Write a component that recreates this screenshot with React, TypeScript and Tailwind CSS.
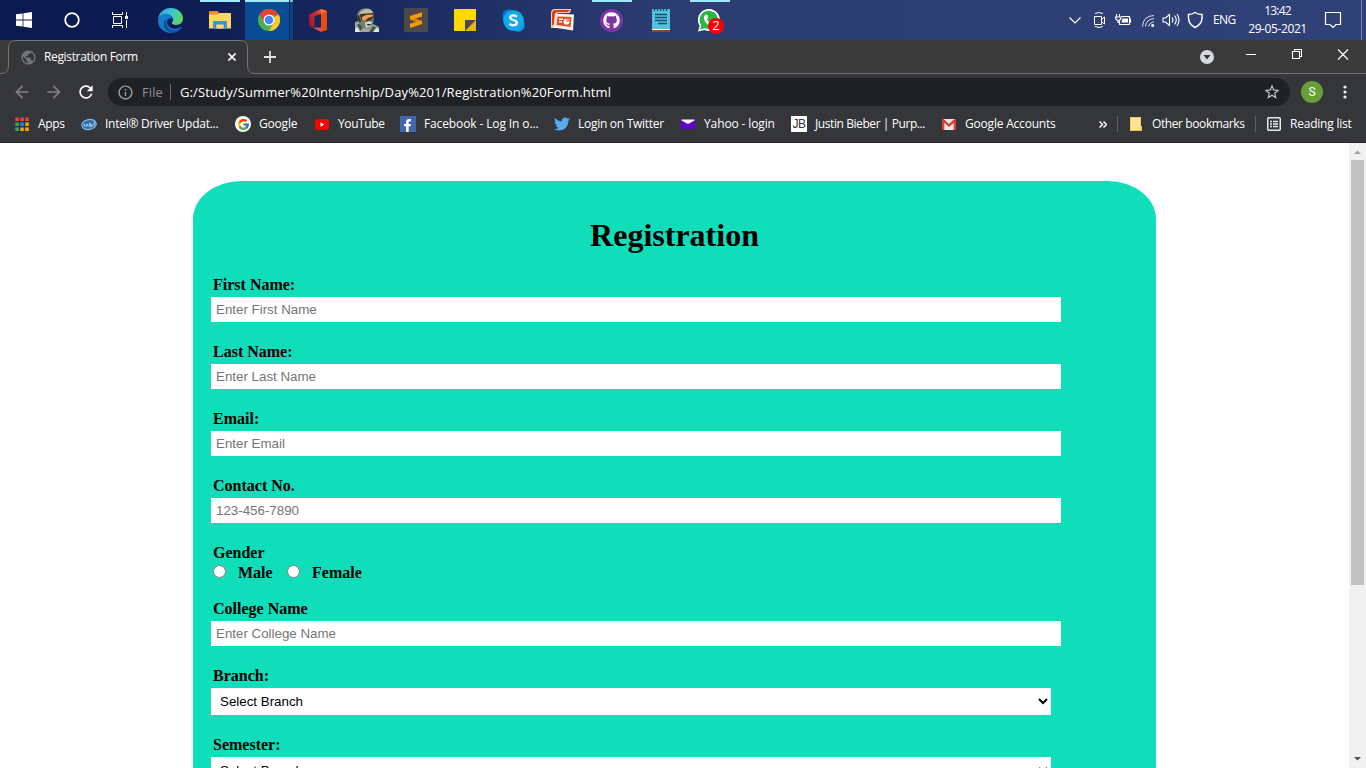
import type { ReactNode } from "react";
import { FaFacebookF, FaGithub, FaTwitter } from "react-icons/fa";
import { FcGoogle } from "react-icons/fc";
import {
  MdArrowBack,
  MdArrowForward,
  MdInfoOutline,
  MdPublic,
  MdRefresh,
  MdStarBorder,
} from "react-icons/md";

/* ---------- Taskbar icons ---------- */

const WindowsLogo = () => (
  <svg width="16" height="16" viewBox="0 0 16 16" fill="#fff">
    <path d="M0 2.3 6.6 1.4V7.6H0zM7.4 1.2 16 0V7.6H7.4zM0 8.4H6.6V14.6L0 13.7zM7.4 8.4H16V16L7.4 14.8z" />
  </svg>
);

const Cortana = () => (
  <svg width="16" height="16" viewBox="0 0 16 16" fill="none">
    <circle cx="8" cy="8" r="6.8" stroke="#fff" strokeWidth="1.800" />
  </svg>
);

const TaskView = () => (
  <svg width="17" height="16" viewBox="0 0 17 16" fill="none" stroke="#fff" strokeWidth="1">
    <path d="M.5 0V2.500H10.500V0M.5 16V13.500H10.500V16M1.500 4.500H9.500V11.500H1.500zM14.500 0V4M14.500 8V16" />
    <path d="M13 4h3v3h-3z" fill="#fff" stroke="none" />
  </svg>
);

const Edge = () => (
  <svg width="25" height="25" viewBox="0 0 24 24">
    <defs>
      <linearGradient id="edgeTop" x1="0" y1=".3" x2="1" y2=".6">
        <stop offset="0" stopColor="#2da4e0" />
        <stop offset=".5" stopColor="#3cc8d4" />
        <stop offset="1" stopColor="#62d854" />
      </linearGradient>
      <linearGradient id="edgeLow" x1="0" y1="0" x2=".7" y2="1">
        <stop offset="0" stopColor="#1482d4" />
        <stop offset="1" stopColor="#1c70c4" />
      </linearGradient>
    </defs>
    <path d="M.2 10.500C1 4 6 0 12 0c7 0 12 4.700 12 10 0 4-3 6.200-6.500 6.200-2.800 0-4.300-1-4.300-1.900 0-.7 1.300-1.100 1.300-3C14.500 8.500 12 6 8 6 4 6 1.500 8 .2 10.500Z" fill="url(#edgeTop)" />
    <path d="M0 12C.3 8.500 3.500 6 7.500 6c4 0 6.800 2.300 7 5-1-1.400-3-1.700-4.300-.6-2.700 2.200-1.600 7.800 4 9.200 3.300.8 5.800-.2 7.600-1.400.5-.3 1 .1.700.6C20.500 22 16.500 24 12 24 5.500 24-.3 18.500 0 12Z" fill="url(#edgeLow)" />
    <path d="M8.800 10.500C6.500 14 8.500 21 15.500 21.500c2.500.2 5-.7 6.800-2.500C20 22.500 16.500 24 13 23.800 8 22.500 5.500 19 5.500 15.500c0-2.300 1.300-4.300 3.300-5Z" fill="#0e4f9e" />
  </svg>
);

const Explorer = () => (
  <svg width="22" height="19" viewBox="0 0 22 19">
    <path d="M0 1Q0 0 1 0H8Q9 0 9.500 1L10 2H21Q22 2 22 3V17H0z" fill="#e39a08" />
    <path d="M0 3.500H9L10.500 2H21Q22 2 22 3V17.500H0z" fill="#ffd767" />
    <path d="M4 18V11Q4 10 5 10H17Q18 10 18 11V18H14.500V13.500H7.500V18z" fill="#3d93d6" />
    <path d="M7.500 14H14.500V17.500H7.500z" fill="#ffd767" />
  </svg>
);

const Chrome = () => (
  <svg width="22" height="22" viewBox="0 0 48 48">
    <circle cx="24" cy="24" r="24" fill="#4caf50" />
    <path d="M24 24 44.800 12A24 24 0 0 1 24 48L34.400 30z" fill="#ffc928" />
    <path d="M3.200 12A24 24 0 0 1 44.800 12L44.800 13.500H24L13.600 30z" fill="#e34134" />
    <circle cx="24" cy="24" r="12" fill="#fff" />
    <circle cx="24" cy="24" r="9.300" fill="#4285f4" />
  </svg>
);

const Office = () => (
  <svg width="18" height="23" viewBox="0 0 18 23">
    <defs>
      <linearGradient id="officeLeft" x1="0" y1="1" x2="1" y2="0">
        <stop offset="0" stopColor="#8e1440" />
        <stop offset=".6" stopColor="#c62b2d" />
        <stop offset="1" stopColor="#f25c2a" />
      </linearGradient>
    </defs>
    <path d="M12 0 18 2V21L12 23z" fill="#eb4b11" />
    <path d="M0 5.500 12 0V5L5.500 7V17L3.500 18.500Q0 17.500 0 14.500z" fill="url(#officeLeft)" />
    <path d="M3.500 18.500H12V23z" fill="#d8515e" />
    <path d="M12 0 18 2 12 5z" fill="#ff7733" />
  </svg>
);

const Spartan = () => (
  <svg width="24" height="24" viewBox="0 0 24 24">
    <path d="M0 14 4 13 8 20 18 16 24 19V24H0z" fill="#9ba89c" />
    <path d="M2 17 5 15 8 20 5 23zM18 18 22 20 19 24H14z" fill="#46564b" />
    <path d="M2 9C2 4 5 1 9 .5 15-.8 19 3 19 8L18 16 14 21 8 20 4 15z" fill="#73826f" />
    <path d="M4 6C6 2 10 .5 14 1L18 4 17 6 5 7z" fill="#b5c0ae" />
    <path d="M5 6 18 5 19 8 16 12 12 14 6 12z" fill="#4b2c20" />
    <path d="M7 9 11 7 18 6.500 17.500 8.500 13 10 10 13 7 12z" fill="#f0a05a" />
    <path d="M10 14 14 13 17 14 15 19 11 20z" fill="#ccd5ca" />
    <path d="M12 16H16L15 17.500H12.500zM2 8 4 7 6 14 4 14z" fill="#2a352e" />
    <path d="M0 24V21L3 19 5 24zM18 24 21 20 24 21V24z" fill="#dfe6dd" />
  </svg>
);

const Sublime = () => (
  <svg width="24" height="24" viewBox="0 0 24 24">
    <rect width="24" height="24" rx="1.500" fill="#4a4a4a" />
    <path d="M18 4.300V8.500L11 10.800 18 13V16L6 20V15.800L12.500 13.700 6 11.500V8z" fill="#ff9800" />
    <path d="M6 11.500 12.500 13.700 18 13 11 10.800z" fill="#e47f00" />
  </svg>
);

const StickyNotes = () => (
  <svg width="22" height="22" viewBox="0 0 22 22">
    <path d="M0 0H22V22H0z" fill="#ffd800" />
    <path d="M11 22 22 11V22z" fill="#edb400" />
    <path d="M11 11H22L11 22z" fill="#494a4c" />
  </svg>
);

const Skype = () => (
  <svg width="23" height="23" viewBox="0 0 23 23">
    <circle cx="7" cy="7" r="6.700" fill="#0078cf" />
    <circle cx="16.200" cy="16.200" r="6.500" fill="#0a9ae4" />
    <circle cx="11.500" cy="11.500" r="10.300" fill="#12a9ed" />
    <path d="M15 7.700C14 6.700 12.800 6.400 11.400 6.400c-1.900 0-3.200.8-3.200 2.200 0 3.100 6.600 1.700 6.600 5 0 1.700-1.600 2.700-3.600 2.700-1.400 0-2.800-.5-3.700-1.400" fill="none" stroke="#fff" strokeWidth="2.300" />
  </svg>
);

const PowerPoint = () => (
  <svg width="24" height="22" viewBox="0 0 24 22">
    <path d="M0 17V4Q0 0 4 0H20Q20 3 18 4H6V19H0z" fill="#f4cbb8" />
    <path d="M1 16V5Q1 1 5 1H19L17 3H7Q4 3 4 6V17z" fill="#da3f13" />
    <path d="M4 4.500 23 5.500 22 21.500 2.500 18.500z" fill="#fff1e9" />
    <path d="M6.500 7.500 20.500 8 19.500 18 5.500 16z" fill="#e84c1c" />
    <path d="M8 9.500H12V11H8zM8 12H11V13.500H8z" fill="#fff" />
    <circle cx="15.500" cy="12.800" r="3" fill="#fff" />
    <path d="M15.500 12.800V9.500H19V12.800z" fill="#f08a62" />
  </svg>
);

const Notepad = () => (
  <svg width="18" height="24" viewBox="0 0 18 24">
    <path d="M0 21H18V24H0z" fill="#8a4a14" />
    <path d="M0 20H18V22H0z" fill="#fff4df" />
    <path d="M0 1H18V21H0z" fill="#55bfe0" />
    <path d="M2.500 0V3M5.500 0V3M8.500 0V3M11.500 0V3M14.500 0V3" stroke="#174863" strokeWidth="1.300" />
    <path d="M3 6.500H15M3 9.500H15M3 12.500H15M6 15.500H15" stroke="#14526b" strokeWidth="1.300" />
  </svg>
);

const WhatsApp = () => (
  <svg width="23" height="23" viewBox="0 0 23 23">
    <path d="M0 22.500 1.600 16.800A11 11 0 1 1 6.500 21z" fill="#fff" />
    <path d="M2 20.500 3.300 16.300A9.200 9.200 0 1 1 7 19.300z" fill="#2bb741" />
    <path d="M7.500 5.500 9.500 6 10 9 9 10.500Q10.500 13 13 14L14.500 12.500 17 14Q17 17 13.500 17.200 8 16 6 10 5.500 7 7.500 5.500Z" fill="#fff" />
  </svg>
);

function TaskButton({ children, running = false, active = false }: { children: ReactNode; running?: boolean; active?: boolean }) {
  return (
    <div className={`relative flex h-10 shrink-0 items-center justify-center ${active ? "ml-px w-12 bg-[#0a4c93]" : "w-[49px]"}`}>
      {running && <span className="absolute top-0 left-[5px] h-[2px] w-10 bg-[#a0e8fc]" />}
      {active && (
        <>
          <span className="absolute top-0 left-0 h-[2px] w-11 bg-[#a0e8fc]" />
          <span className="absolute top-0 right-0 h-full w-1 border-l border-[#052c65] bg-[#0b437f]" />
          <span className="absolute top-0 right-0 h-[2px] w-[3px] bg-[#80b9cb]" />
        </>
      )}
      {children}
    </div>
  );
}

function Tray() {
  return (
    <div className="relative flex h-10 w-[300px] items-center text-white">
      <svg className="w-[300px] shrink-0" height="40" viewBox="1066 0 300 40" fill="none" stroke="#fff" strokeWidth="1.200">
        <path d="M1069.500 17.500 1075 23 1080.500 17.500" />
        <path d="M1094.500 16.500H1101.500V24.500H1094.500zM1102 19 1104.500 17V24L1102 22M1095 13.500Q1099 11.500 1103 13.500M1095 26.500Q1099 28.500 1103 26.500" strokeWidth="1" />
        <path d="M1122 17.500H1144.500" stroke="none" />
        <path d="M1121.500 16.500H1129.500V24.500H1119.500V21M1130.500 18.500V22.500M1116.500 14V17M1119.500 14V17M1115 17H1121V18Q1121 20 1118 20.500 1115.500 20 1115.500 17M1118 20V22.500H1120" strokeWidth="1.100" />
        <path d="M1122.500 18.500H1128V22.500H1121.500z" fill="#fff" stroke="none" />
        <path d="M1142.500 26.500Q1143 16 1154 15.500M1145.500 26.500Q1146 19.500 1154 18.500M1148.500 26.500Q1149 23 1154 21.500" stroke="#dfe4ef" strokeWidth="1" />
        <circle cx="1152.700" cy="25.500" r="1.500" fill="#fff" stroke="none" />
        <path d="M1163 18H1165.500L1169.500 14.500V25.500L1165.500 22H1163zM1172 17.500Q1174 20 1172 22.500M1174.500 15.500Q1178 20 1174.500 24.500M1177 14Q1181 20 1177 26" strokeWidth="1.100" />
        <path d="M1195 12.500Q1198 14.500 1202 14.500V18Q1202 24 1195 27.500 1188.500 24 1188.500 18V14.500Q1192 14.500 1195 12.500Z" strokeWidth="1.500" />
        <path d="M1325.500 12.500H1340.500V24.500H1336L1333 27.500 1330 24.500H1325.500z" />
        <path d="M1361.500 0V40" stroke="#7785ad" strokeWidth="1" />
      </svg>
      <span className="absolute top-[12px] left-[147px] text-[12px] leading-4 tracking-[-0.6px]">ENG</span>
      <div className="absolute top-[2px] left-[172px] w-20 text-center text-[12px] leading-[18px]">
        <div className="-ml-px tracking-[-0.8px]">13:42</div>
        <div className="-ml-px tracking-[-0.4px]">29-05-2021</div>
      </div>
    </div>
  );
}

function Taskbar() {
  return (
    <div className="flex h-10 shrink-0 justify-between bg-linear-to-r from-[#0b1a50] from-10% via-[#2c3d72] via-50% to-[#2f4178]">
      <div className="flex">
        <div className="flex w-12 items-center justify-center"><WindowsLogo /></div>
        <div className="flex w-12 items-center justify-center"><Cortana /></div>
        <div className="mr-px flex w-[49px] items-center justify-center"><TaskView /></div>
        <TaskButton><Edge /></TaskButton>
        <TaskButton running><Explorer /></TaskButton>
        <TaskButton active><Chrome /></TaskButton>
        <TaskButton><Office /></TaskButton>
        <TaskButton><Spartan /></TaskButton>
        <TaskButton><Sublime /></TaskButton>
        <TaskButton><StickyNotes /></TaskButton>
        <TaskButton><Skype /></TaskButton>
        <TaskButton><PowerPoint /></TaskButton>
        <TaskButton running>
          <span className="flex size-[23px] items-center justify-center rounded-full bg-[#7d35a5] text-white">
            <FaGithub size={17} />
          </span>
        </TaskButton>
        <TaskButton><Notepad /></TaskButton>
        <TaskButton running>
          <WhatsApp />
          <span className="absolute top-[18px] left-[23px] flex size-4 items-center justify-center rounded-full bg-[#fb0007] text-[13px] text-white">2</span>
        </TaskButton>
      </div>
      <Tray />
    </div>
  );
}

/* ---------- Browser ---------- */

function TabStrip() {
  return (
    <div className="relative flex h-[34px] shrink-0 bg-[#3a3a3a] text-white">
      <svg className="absolute inset-0" width="1366" height="34" fill="#35363a" stroke="#747577">
        <path d="M-1 33.500H1Q8.500 33.500 8.500 26V8Q8.500.5 16 .5H240Q247.500.5 247.500 8V26Q247.500 33.500 255 33.500H1367V36H-1z" />
      </svg>
      <div className="relative flex h-[34px] w-[248px] items-center pl-5">
        <MdPublic className="text-[#73757a]" size={17} />
        <span className="ml-[7px] flex-1 text-[12px] tracking-[-0.35px]">Registration Form</span>
        <svg className="mr-3" width="8" height="8" viewBox="0 0 8 8" stroke="#fff" strokeWidth="1.600"><path d="M.4.4 7.600 7.600M7.600.4.4 7.600" /></svg>
      </div>
      <svg className="relative mt-[11px] ml-4" width="12" height="12" viewBox="0 0 12 12" stroke="#dee1e6" strokeWidth="1.800"><path d="M6 0V12M0 6H12" /></svg>
      <svg className="relative ml-auto" width="176" height="34" viewBox="1190 40 176 34" fill="none" stroke="#fff">
        <circle cx="1207" cy="57" r="7" fill="#d5d8dc" stroke="none" />
        <path d="M1203.500 55H1210.500L1207 59.500z" fill="#35363a" stroke="none" />
        <path d="M1246 54.500H1256M1292.500 51.500H1299.500V58.500H1292.500zM1294.500 51V49.500H1301.500V56.500H1300M1338 49.500 1348 59.500M1348 49.500 1338 59.500" strokeWidth="1.100" />
      </svg>
    </div>
  );
}

function Toolbar() {
  return (
    <div className="flex h-9 shrink-0 items-center bg-[#35363a] text-white">
      <MdArrowBack className="ml-3 text-[#808184]" size={20} />
      <MdArrowForward className="ml-3 text-[#808184]" size={20} />
      <MdRefresh className="ml-3" size={20} />
      <div className="ml-3 flex h-7 w-[1182px] items-center rounded-full bg-[#202124] pl-[9px]">
        <MdInfoOutline className="text-[#9aa0a6]" size={17} />
        <span className="ml-2 w-[21px] pt-0.5 text-[13px] tracking-[0.1px] text-[#8c9095]">File</span>
        <span className="ml-[7px] h-4 w-px bg-[#6a6c70]" />
        <span className="ml-[9px] pt-0.5 text-[13px] tracking-[0.125px] whitespace-nowrap">G:/Study/Summer%20Internship/Day%201/Registration%20Form.html</span>
        <MdStarBorder className="mr-[9px] ml-auto text-[#c5c8cc]" size={18} />
      </div>
      <span className="ml-[11px] flex size-[22px] items-center justify-center rounded-full bg-[#689f38] font-['Roboto',sans-serif] text-[12px]">S</span>
      <svg className="ml-5" width="4" height="14" viewBox="0 0 4 14" fill="#f1f3f4">
        <circle cx="2" cy="2" r="1.600" /><circle cx="2" cy="7" r="1.600" /><circle cx="2" cy="12" r="1.600" />
      </svg>
    </div>
  );
}

const appColors = ["#e8453c", "#e8453c", "#e8453c", "#34a853", "#1a85ff", "#f5ab00", "#34a853", "#f5ab00", "#f5ab00"];

const AppsIcon = () => (
  <svg width="14" height="14" viewBox="0 0 14 14">
    {appColors.map((color, i) => (
      <rect key={i} x={(i % 3) * 5 + 0.3} y={Math.floor(i / 3) * 5 + 0.5} width="3.500" height="3.500" fill={color} />
    ))}
  </svg>
);

const IntelIcon = () => (
  <svg width="17" height="13" viewBox="0 0 17 13" fill="none">
    <ellipse cx="8.500" cy="6.500" rx="7.700" ry="5.300" transform="rotate(-10 8.500 6.500)" fill="#2c6cab" stroke="#84bde9" strokeWidth="1.200" />
    <path d="M3.500 5.500V9M5.500 9V6.500H7.500V9M9.500 4.500V9M12 9H10.500V7H13M14 3.500V8.500M8.500 6H10.500" stroke="#b4d9f5" />
  </svg>
);

const GoogleIcon = () => (
  <span className="flex size-4 items-center justify-center rounded-full bg-white"><FcGoogle size={13} /></span>
);

const YouTubeIcon = () => (
  <svg width="14" height="11" viewBox="0 0 14 11"><rect width="14" height="11" rx="2.500" fill="#f00" /><path d="M5.500 3.200V7.800L9.300 5.500z" fill="#fff" /></svg>
);

const FacebookIcon = () => (
  <span className="flex size-4 items-end justify-end bg-[#4267b2] pr-0.5 text-white"><FaFacebookF size={13} /></span>
);

const YahooIcon = () => (
  <svg width="14" height="10" viewBox="0 0 14 10"><path d="M0 0H14V10H0z" fill="#6001d2" /><path d="M.5.5H13.500V1.500L7 5 .5 1.500z" fill="#fff" /></svg>
);

const JbIcon = () => (
  <span className="flex size-4 items-center justify-center bg-white font-['Liberation_Sans',sans-serif] text-[12px] tracking-[-0.5px] text-[#333]">JB</span>
);

const GmailIcon = () => (
  <svg width="14" height="11" viewBox="0 0 14 11"><path d="M0 0H14V11H0z" fill="#e8e8e8" /><path d="M1.200 11V1.200L7 6.500 12.800 1.200V11" fill="none" stroke="#d93c31" strokeWidth="2.300" /></svg>
);

const FolderIcon = () => (
  <svg width="12" height="14" viewBox="0 0 12 14"><path d="M0 0H11V9H12V14H0z" fill="#f4cc55" /><path d="M1 1H10V10L9 13H1z" fill="#ffe493" /></svg>
);

const ReadingListIcon = () => (
  <svg width="14" height="14" viewBox="0 0 14 14" fill="none" stroke="#e8eaed"><rect x=".75" y=".75" width="12.500" height="12.500" rx="1" strokeWidth="1.500" /><path d="M3 4.500H5M6 4.500H11M3 7H5M6 7H11M3 9.500H5M6 9.500H11" strokeWidth="1.400" /></svg>
);

function Bookmark({ icon, label, className }: { icon: ReactNode; label: string; className: string }) {
  return (
    <div className={`flex shrink-0 items-center whitespace-nowrap ${className}`}>
      <span className="mr-2 flex w-4 shrink-0 items-center justify-center">{icon}</span>
      {label}
    </div>
  );
}

function BookmarksBar() {
  return (
    <div className="flex h-[33px] shrink-0 items-center border-b border-[#27282b] bg-[#35363a] pb-1 pl-[14px] text-[12px] text-white">
      <Bookmark icon={<AppsIcon />} label="Apps" className="w-[67px] tracking-[-0.3px]" />
      <Bookmark icon={<IntelIcon />} label="Intel® Driver Updat..." className="w-[154px] tracking-[-0.26px]" />
      <Bookmark icon={<GoogleIcon />} label="Google" className="w-[79px] tracking-[-0.2px]" />
      <Bookmark icon={<YouTubeIcon />} label="YouTube" className="w-[86px] tracking-[-0.4px]" />
      <Bookmark icon={<FacebookIcon />} label="Facebook - Log In o..." className="w-[154px] tracking-[-0.12px]" />
      <Bookmark icon={<FaTwitter size={16} color="#55acee" />} label="Login on Twitter" className="w-[126px] tracking-[-0.28px]" />
      <Bookmark icon={<YahooIcon />} label="Yahoo - login" className="w-[111px] tracking-[-0.12px]" />
      <Bookmark icon={<JbIcon />} label="Justin Bieber | Purp..." className="w-[150px] tracking-[-0.42px]" />
      <Bookmark icon={<GmailIcon />} label="Google Accounts" className="w-[158px] tracking-[-0.2px]" />
      <svg width="8" height="7" viewBox="0 0 8 7" fill="none" stroke="#fff" strokeWidth="1.500"><path d="M.5.5 3.500 3.500.5 6.500M4.500.5 7.500 3.500 4.500 6.500" /></svg>
      <span className="ml-[10px] h-4 w-px bg-[#606165]" />
      <Bookmark icon={<FolderIcon />} label="Other bookmarks" className="ml-[10px] w-[127px] tracking-[-0.4px]" />
      <span className="h-4 w-px bg-[#606165]" />
      <Bookmark icon={<ReadingListIcon />} label="Reading list" className="ml-[10px] tracking-[-0.22px]" />
    </div>
  );
}

/* ---------- Page ---------- */

function TextField({ label, placeholder }: { label: string; placeholder: string }) {
  return (
    <label className="mb-[21px] block">
      <span className="block pl-0.5 leading-[18px]">{label}</span>
      <input
        type="text"
        placeholder={placeholder}
        className="mt-[3px] block h-[25px] w-[850px] bg-white px-[5px] font-['Liberation_Sans',sans-serif] text-[13.333px] font-normal placeholder:text-[#757575]"
      />
    </label>
  );
}

function SelectField({ label }: { label: string }) {
  return (
    <label className="mb-[21px] block">
      <span className="block pl-0.5 leading-[18px]">{label}</span>
      <select className="mt-[3px] block h-[27px] w-[840px] bg-white px-[5px] font-['Liberation_Sans',sans-serif] text-[13.333px] font-normal text-black">
        <option>Select Branch</option>
      </select>
    </label>
  );
}

function RegistrationForm() {
  return (
    <form className="ml-[193px] mt-[38px] h-[760px] w-[963px] shrink-0 rounded-tl-[48px_38px] rounded-tr-[48px_38px] bg-[#10ddba] pl-[18px] font-['Liberation_Serif',serif] text-[16px] font-bold text-black">
      <h1 className="-ml-[18px] pt-9 text-center text-[32px] leading-9">Registration</h1>
      <div className="pt-[23px]">
        <TextField label="First Name:" placeholder="Enter First Name" />
        <TextField label="Last Name:" placeholder="Enter Last Name" />
        <TextField label="Email:" placeholder="Enter Email" />
        <TextField label="Contact No." placeholder="123-456-7890" />
        <fieldset className="mb-[18px] h-[38px] pl-0.5 leading-[18px]">
          <div>Gender</div>
          <div className="mt-0.5 flex">
            <label className="flex w-[74px]"><input type="radio" name="gender" className="mt-px mr-3 size-[13px]" />Male</label>
            <label className="flex"><input type="radio" name="gender" className="mt-px mr-3 size-[13px]" />Female</label>
          </div>
        </fieldset>
        <TextField label="College Name" placeholder="Enter College Name" />
        <SelectField label="Branch:" />
        <SelectField label="Semester:" />
      </div>
    </form>
  );
}

function Scrollbar() {
  return (
    <div className="flex w-[17px] shrink-0 flex-col items-center bg-[#f1f1f1]">
      <svg className="shrink-0" width="17" height="17"><path d="M5 11H12L8.500 7.500z" fill="#a3a3a3" /></svg>
      <div className="h-[425px] w-[13px] bg-[#c1c1c1]" />
      <svg className="mt-auto shrink-0" width="17" height="17"><path d="M5 6H12L8.500 9.500z" fill="#505050" /></svg>
    </div>
  );
}

export default function App() {
  return (
    <div className="flex h-screen w-[1366px] flex-col overflow-hidden bg-white font-['Open_Sans','Noto_Sans',sans-serif]">
      <Taskbar />
      <TabStrip />
      <Toolbar />
      <BookmarksBar />
      <main className="flex min-h-0 flex-1">
        <div className="flex-1 overflow-hidden">
          <div className="flex"><RegistrationForm /></div>
        </div>
        <Scrollbar />
      </main>
    </div>
  );
}
